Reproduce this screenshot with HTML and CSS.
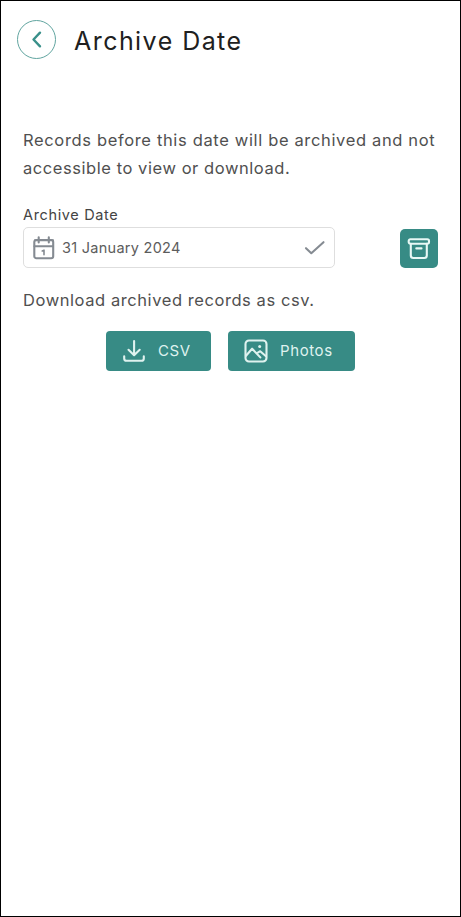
FILE: index.html
```html
<!DOCTYPE html>
<html lang="en">
<head>
<meta charset="utf-8">
<title>Archive Date</title>
<link rel="stylesheet" href="styles.css">
</head>
<body>
<main class="screen">
  <header class="header">
    <button class="back" aria-label="Back">
      <svg width="39" height="39" viewBox="0 0 39 39"><path d="M23 12.7L16.5 19.5L23 26.3"/></svg>
    </button>
    <h1 class="title"><span>Archive Date</span></h1>
  </header>
  <p class="intro"><span class="line1">Records before this date will be archived and not</span><br><span class="line2">accessible to view or download.</span></p>
  <div class="label"><span>Archive Date</span></div>
  <div class="row">
    <div class="field">
      <svg class="calendar" width="22" height="24" viewBox="0 0 22 24"><rect x="1.3" y="4" width="18.9" height="18.2" rx="2"/><path d="M1.5 10.2H20M5.7 1.2V6.4M15.8 1.2V6.4M2 4.2H20"/><path class="one" d="M9.2 14.9L11 14.2V18.7"/></svg>
      <span class="date">31 January 2024</span>
      <svg class="check" width="22" height="16" viewBox="0 0 22 16"><path d="M2 8.2L7.3 13.2L19.5 2.2"/></svg>
    </div>
    <button class="archive" aria-label="Archive">
      <svg width="24" height="24" viewBox="0 0 24 24"><rect x="1.7" y="2.3" width="20.3" height="4.4" rx="1.7"/><path d="M3.8 6.8V18.5Q3.8 21 6.3 21H17.3Q19.8 21 19.8 18.5V6.8M9.3 11.4H14.5"/></svg>
    </button>
  </div>
  <p class="download"><span>Download archived records as csv.</span></p>
  <div class="actions">
    <button class="btn csv">
      <svg width="24" height="24" viewBox="0 0 24 24"><path d="M12.1 2V16M6.5 10.8L12.1 16.2L17.7 10.8M2.2 17.2V19.5Q2.2 21.8 4.5 21.8H19.5Q21.8 21.8 21.8 19.5V17.2"/></svg>
      <span>CSV</span>
    </button>
    <button class="btn photos">
      <svg width="24" height="24" viewBox="0 0 24 24"><rect x="1.5" y="1.5" width="21" height="21" rx="3.5"/><path d="M2 16.8L8.1 9.7L16.3 18.4M12.7 14.4L16.2 12.2L22 17.2"/><circle class="sun" cx="15.7" cy="7.6" r="1.5"/></svg>
      <span>Photos</span>
    </button>
  </div>
</main>
</body>
</html>
```
FILE: styles.css
```css
* { box-sizing: border-box; }
body { margin: 0; background: #fff; font-family: Inter, Roboto, sans-serif; color: #505050; }
.screen { height: 917px; border: 1px solid #000; padding: 18px 22px 0 16px; }
button { border: 0; padding: 0; margin: 0; font: inherit; }
svg { display: block; flex: none; fill: none; stroke: currentColor; stroke-width: 2.1; stroke-linecap: round; stroke-linejoin: round; }
p, h1 { margin: 0; font-weight: 400; white-space: nowrap; }
.header { display: flex; align-items: center; height: 40px; }
.back { width: 39px; height: 39px; border: 1px solid #61a5a0; border-radius: 50%; background: #fff; color: #39908a; display: flex; align-items: center; justify-content: center; }
.back svg { stroke-width: 2.4; }
.title { margin-left: 18px; padding-top: 3px; font-size: 25px; line-height: 36px; letter-spacing: 1.45px; color: #202020; }
.intro { margin: 67px 0 0 6px; font-size: 16.5px; line-height: 28px; }
.line1 { letter-spacing: .65px; }
.line2 { letter-spacing: .56px; }
.label { margin: 23px 0 0 6px; font-size: 14.5px; line-height: 20px; letter-spacing: .65px; color: #444; }
.row { display: flex; justify-content: space-between; align-items: center; margin: 2px 0 0 6px; }
.field { width: 312px; height: 41px; border: 1px solid #dedede; border-radius: 5px; display: flex; align-items: center; padding: 0 8px 0 9px; color: #858b92; }
.calendar .one { stroke-width: 1.6; }
.date { margin-left: 7px; color: #5c5c5c; font-size: 14.5px; letter-spacing: .27px; }
.check { margin-left: auto; }
.archive { width: 38px; height: 39px; margin-top: 2px; border-radius: 5px; background: #378b85; color: #e8f8f5; display: flex; align-items: center; justify-content: center; }
.download { margin: 18px 0 0 6px; font-size: 16.5px; line-height: 28px; letter-spacing: .57px; }
.actions { display: flex; gap: 17px; margin: 17px 0 0 89px; }
.btn { height: 40px; border-radius: 4px; background: #378b85; color: #dff2ef; display: flex; align-items: center; font-size: 15px; letter-spacing: .6px; }
.btn svg { margin-left: 16px; }
.btn span { margin-left: 12px; padding-bottom: 1px; }
.sun { fill: currentColor; stroke: none; }
.csv { width: 105px; }
.photos { width: 127px; }
```
